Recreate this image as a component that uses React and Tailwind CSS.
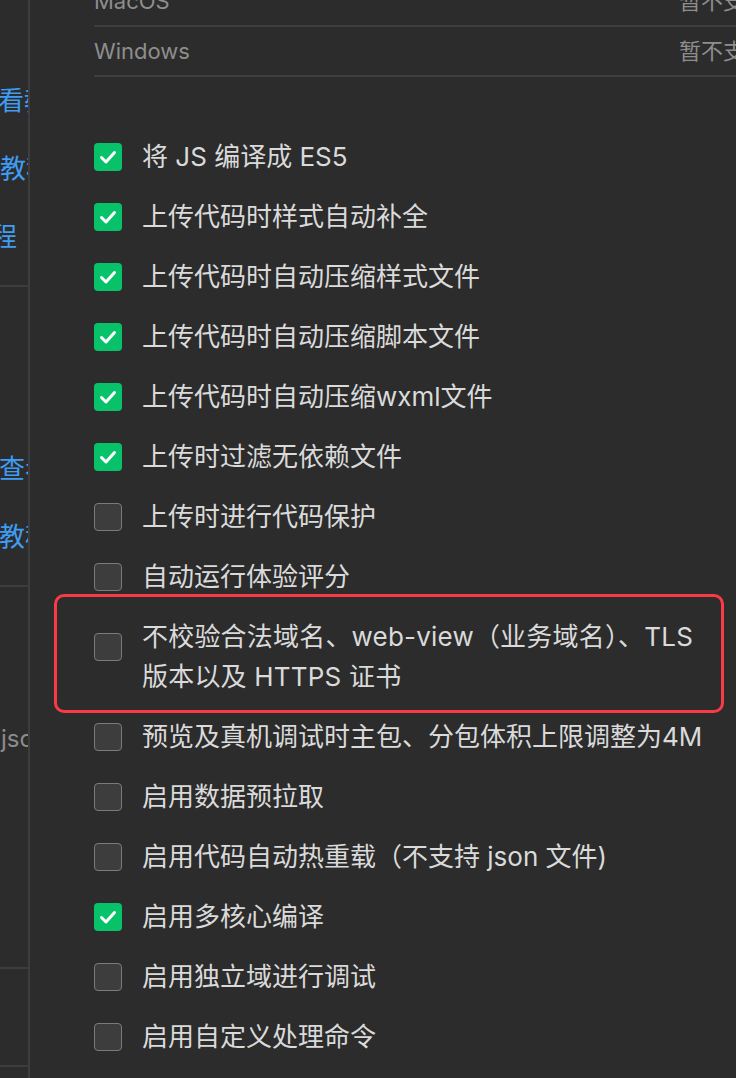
import React from "react";

const items = [
  { label: "将 JS 编译成 ES5", checked: true },
  { label: "上传代码时样式自动补全", checked: true },
  { label: "上传代码时自动压缩样式文件", checked: true },
  { label: "上传代码时自动压缩脚本文件", checked: true },
  { label: "上传代码时自动压缩wxml文件", checked: true },
  { label: "上传时过滤无依赖文件", checked: true },
  { label: "上传时进行代码保护", checked: false },
  { label: "自动运行体验评分", checked: false },
  { label: "HL", checked: false, highlight: true },
  { label: "预览及真机调试时主包、分包体积上限调整为4M", checked: false },
  { label: "启用数据预拉取", checked: false },
  { label: "启用代码自动热重载（不支持 json 文件)", checked: false },
  { label: "启用多核心编译", checked: true },
  { label: "启用独立域进行调试", checked: false },
  { label: "启用自定义处理命令", checked: false },
];

function Box({ checked }) {
  if (checked) {
    return (
      <div className="w-[28px] h-[28px] shrink-0 rounded-[4px] bg-[#08c26a] flex items-center justify-center">
        <svg width="28" height="28" viewBox="0 0 28 28">
          <path d="M7.5 14.5 L12 19 L20.5 9.5" fill="none" stroke="#ffffff" strokeWidth="3" strokeLinecap="round" strokeLinejoin="round" />
        </svg>
      </div>
    );
  }
  return <div className="w-[28px] h-[28px] shrink-0 rounded-[4px] bg-[#3d3d3d] border border-[#7a7a7a]" />;
}

export default function App() {
  const font = { fontFamily: 'Inter, "Noto Sans CJK SC", sans-serif' };
  return (
    <div className="w-[736px] h-[1078px] overflow-hidden bg-[#2c2c2c] flex" style={font}>
      {/* sidebar */}
      <div className="w-[30px] shrink-0 flex flex-col overflow-hidden border-r-2 border-[#3d3d3d]">
        <div className="h-[287px] shrink-0 border-b-2 border-[#3d3d3d] flex flex-col">
          <div className="h-[88px]" />
          <div className="text-[26px] leading-[26px] text-[#3f9df4] whitespace-nowrap -ml-[2px]">看教</div>
          <div className="h-[42px]" />
          <div className="text-[26px] leading-[26px] text-[#3f9df4] whitespace-nowrap ml-0">教程</div>
          <div className="h-[42px]" />
          <div className="text-[26px] leading-[26px] text-[#3f9df4] whitespace-nowrap -ml-[9px]">程</div>
        </div>
        <div className="h-[300px] shrink-0 border-b-2 border-[#3d3d3d] flex flex-col">
          <div className="h-[169px]" />
          <div className="text-[26px] leading-[26px] text-[#3f9df4] whitespace-nowrap -ml-[1px]">查看</div>
          <div className="h-[42px]" />
          <div className="text-[26px] leading-[26px] text-[#3f9df4] whitespace-nowrap -ml-[1px]">教程</div>
        </div>
        <div className="h-[382px] shrink-0 border-b-2 border-[#3d3d3d] flex flex-col">
          <div className="h-[139px]" />
          <div className="text-[24px] leading-[26px] text-[#8c8c8c] whitespace-nowrap -ml-[6px]">.json</div>
        </div>
        <div className="h-[98px] shrink-0 border-b-2 border-[#3d3d3d]" />
      </div>

      {/* main */}
      <div className="flex-1 overflow-hidden pl-[64px]">
        <div className="-mt-[23px]">
          {["MacOS", "Windows"].map((t) => (
            <div key={t} className="h-[50px] border-b-2 border-[#3f3f3f] flex items-center whitespace-nowrap text-[22px] text-[#8e8e8e]">
              <div className="w-[585px] shrink-0">{t}</div>
              <div>暂不支持</div>
            </div>
          ))}
        </div>
        <div className="h-[50px]" />
        <div className="flex flex-col">
          {items.map((it, i) =>
            it.highlight ? (
              <div key={i} className="relative flex items-start gap-[20px] py-[10px]">
                <div className="mt-[16px]">
                  <Box checked={false} />
                </div>
                <div className="text-[26px] leading-[40px] text-[#dadada] whitespace-nowrap tracking-[0.2px]">
                  不校验合法域名、web-view（业务域名）、TLS
                  <br />
                  版本以及 HTTPS 证书
                </div>
                <div className="absolute left-[-40px] top-[-13px] w-[670px] h-[119px] border-[3px] border-[#fb3a47] rounded-[10px]" />
              </div>
            ) : (
              <div key={i} className="h-[60px] flex items-center gap-[20px]">
                <Box checked={it.checked} />
                <div className="text-[26px] leading-[40px] text-[#dadada] whitespace-nowrap">{it.label}</div>
              </div>
            )
          )}
        </div>
      </div>
    </div>
  );
}
